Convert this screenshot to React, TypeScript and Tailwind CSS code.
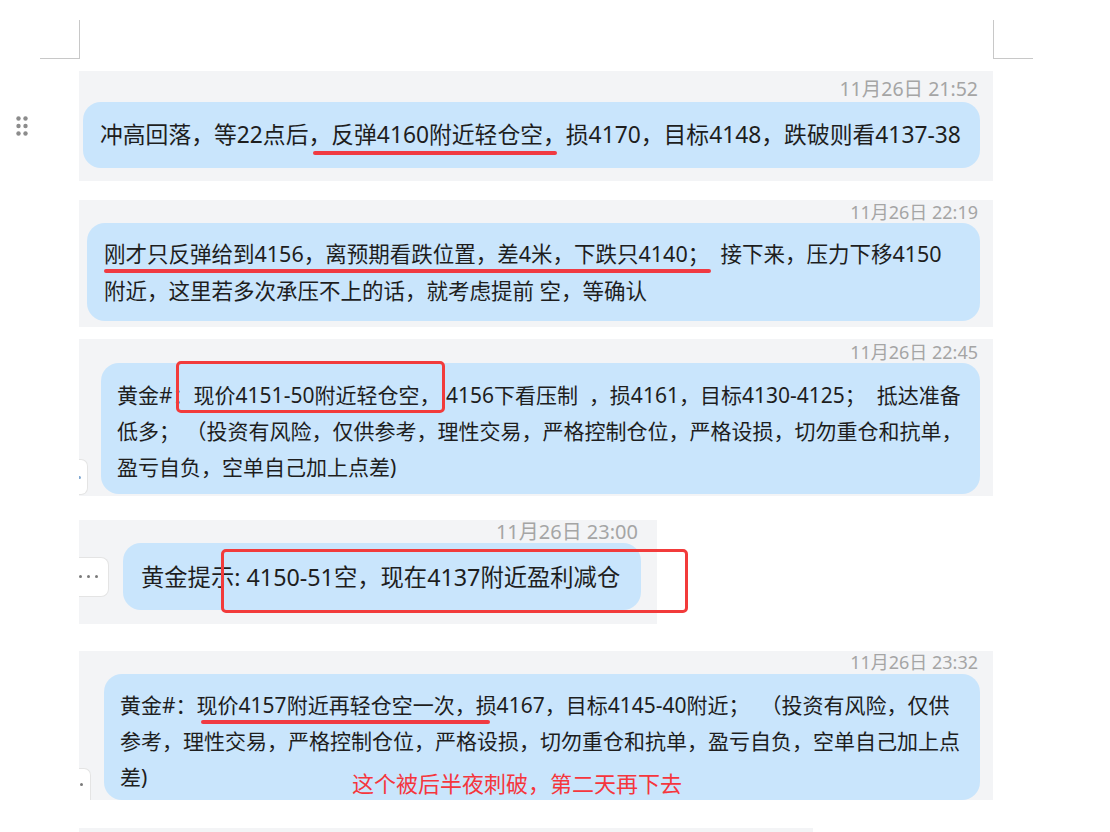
import React from "react";

const Stamp = ({ t, pr = "pr-[15px]", size = "text-[18px]" }: { t: string; pr?: string; size?: string }) => (
  <div className={`h-[22px] leading-[22px] text-right text-[#a5a5a5] ${size} ${pr}`}>{t}</div>
);

const Grip = () => (
  <svg width="12" height="20" viewBox="0 0 12 20">
    {[2.5, 10, 17.5].map((y) => (
      <g key={y}>
        <circle cx="2.5" cy={y} r="2.2" fill="#8c8c8c" />
        <circle cx="9.5" cy={y} r="2.2" fill="#8c8c8c" />
      </g>
    ))}
  </svg>
);

export default function App() {
  return (
    <div className="w-[1110px] h-[832px] bg-white overflow-hidden text-[#1e1e1e] font-['Noto_Sans','Noto_Sans_CJK_SC',sans-serif]">
      {/* crop marks */}
      <div className="flex pt-[20px] pl-[40px]">
        <div className="w-[40px] h-[39px] border-r border-b border-[#c8c8c8]" />
        <div className="w-[913px]" />
        <div className="w-[40px] h-[39px] border-l border-b border-[#c8c8c8]" />
      </div>

      {/* block 1 */}
      <div className="flex items-center mt-[12px]">
        <div className="w-[79px] pl-[16px] flex items-center">
          <Grip />
        </div>
        <div className="w-[914px] bg-[#f3f4f6] pt-[7px] pb-[13px]">
          <Stamp t="11月26日 21:52" size="text-[19.5px]" />
          <div className="mt-[2px] ml-[4px] mr-[13px] h-[66px] rounded-[18px] bg-[#c9e5fc] pl-[17px] flex items-center text-[22.8px] leading-[30px] whitespace-nowrap">
            <span>
              冲高回落，等22点后，
              <span className="relative inline-block">
                反弹4160附近轻仓空，
                <span className="absolute -left-[18px] right-[9px] top-[31px] h-[4px] rounded-full bg-[#f03a42]" />
              </span>
              损4170，目标4148，跌破则看4137-38
            </span>
          </div>
        </div>
      </div>

      {/* block 2 */}
      <div className="flex mt-[19px]">
        <div className="w-[79px]" />
        <div className="w-[914px] bg-[#f3f4f6] pt-[1px] pb-[6px]">
          <Stamp t="11月26日 22:19" />
          <div className="ml-[8px] mr-[13px] rounded-[18px] bg-[#c9e5fc] pl-[17px] py-[12px] text-[21.5px] leading-[37px] whitespace-nowrap">
            <div>
              <span className="relative inline-block">
                刚才只反弹给到4156，离预期看跌位置，差4米，下跌只4140；
                <span className="absolute left-0 -right-[2px] top-[34px] h-[4px] rounded-full bg-[#f03a42]" />
              </span>
              {"\u00a0\u00a0"}接下来，压力下移4150
            </div>
            <div>附近，这里若多次承压不上的话，就考虑提前 空，等确认</div>
          </div>
        </div>
      </div>

      {/* block 3 */}
      <div className="flex mt-[12px]">
        <div className="w-[79px]" />
        <div className="w-[914px] bg-[#f3f4f6] pt-[2px] pb-[2px]">
          <Stamp t="11月26日 22:45" />
          <div className="flex items-end">
            <div className="w-[9px] h-[36px] bg-white rounded-r-[7px] border border-l-0 border-[#e4e4e4] mb-[-1px] flex items-center">
              <span className="w-[2px] h-[3px] rounded-r-full bg-[#7fa7d0]" />
            </div>
            <div className="ml-[13px] w-[879px] rounded-[18px] bg-[#c9e5fc] pl-[16px] pt-[14px] pb-[9px] text-[21px] leading-[36px] whitespace-nowrap">
              <div>
                黄金#：
                <span className="relative inline-block">
                  现价4151-50附近轻仓空，
                  <span className="absolute -left-[18px] -right-[5px] -top-[16px] bottom-0 border-[3px] border-[#f23b3b] rounded-[5px]" />
                </span>
                {"\u00a0"}4156下看压制{"\u00a0\u00a0"}，损4161，目标4130-4125；{"\u00a0\u00a0"}抵达准备
              </div>
              <div>低多； （投资有风险，仅供参考，理性交易，严格控制仓位，严格设损，切勿重仓和抗单，</div>
              <div>盈亏自负，空单自己加上点差)</div>
            </div>
          </div>
        </div>
      </div>

      {/* block 4 */}
      <div className="flex mt-[24px]">
        <div className="w-[79px]" />
        <div className="relative w-[578px] bg-[#f3f4f6] pt-[1px] pb-[14px]">
          <Stamp t="11月26日 23:00" pr="pr-[19px]" size="text-[20px]" />
          <div className="flex items-center">
            <div className="w-[30px] h-[40px] bg-white rounded-r-[8px] border border-l-0 border-[#e4e4e4] flex items-center gap-[5px]">
              <span className="w-[3px] h-[3px] rounded-full bg-[#7a7a7a]" />
              <span className="w-[3px] h-[3px] rounded-full bg-[#7a7a7a]" />
              <span className="w-[3px] h-[3px] rounded-full bg-[#7a7a7a]" />
            </div>
            <div className="ml-[14px] w-[518px] h-[67px] rounded-[18px] bg-[#c9e5fc] pl-[18px] flex items-center text-[23.3px] leading-[30px] whitespace-nowrap">
              黄金提示: 4150-51空，现在4137附近盈利减仓
            </div>
          </div>
          <div className="absolute left-[142px] top-[29px] w-[467px] h-[64px] border-[3px] border-[#f23b3b] rounded-[5px]" />
        </div>
      </div>

      {/* block 5 */}
      <div className="flex mt-[27px]">
        <div className="w-[79px]" />
        <div className="w-[914px] bg-[#f3f4f6]">
          <Stamp t="11月26日 23:32" />
          <div className="flex items-end mt-[1px]">
            <div className="w-[12px] h-[32px] bg-white rounded-tr-[7px] border border-l-0 border-b-0 border-[#e4e4e4] flex items-center pl-[1px]">
              <span className="w-[3px] h-[3px] rounded-full bg-[#7a7a7a]" />
            </div>
            <div className="relative ml-[13px] w-[876px] rounded-[18px] bg-[#c9e5fc] pl-[16px] pt-[13px] pb-[5px] text-[21px] leading-[36px] whitespace-nowrap">
              <div>
                黄金#：
                <span className="relative inline-block">
                  现价4157附近再轻仓空一次，
                  <span className="absolute left-[4px] -right-[14px] top-[33px] h-[4px] rounded-full bg-[#f03a42]" />
                </span>
                损4167，目标4145-40附近；{"\u00a0\u00a0"}（投资有风险，仅供
              </div>
              <div>参考，理性交易，严格控制仓位，严格设损，切勿重仓和抗单，盈亏自负，空单自己加上点</div>
              <div>差)</div>
              <div className="absolute left-[248px] top-[94px] text-[22px] leading-[30px] text-[#f5363d]">
                这个被后半夜刺破，第二天再下去
              </div>
            </div>
          </div>
        </div>
      </div>

      {/* next block peek */}
      <div className="flex mt-[28px]">
        <div className="w-[79px]" />
        <div className="w-[734px] h-[10px] bg-[#f3f4f6]" />
      </div>
    </div>
  );
}
